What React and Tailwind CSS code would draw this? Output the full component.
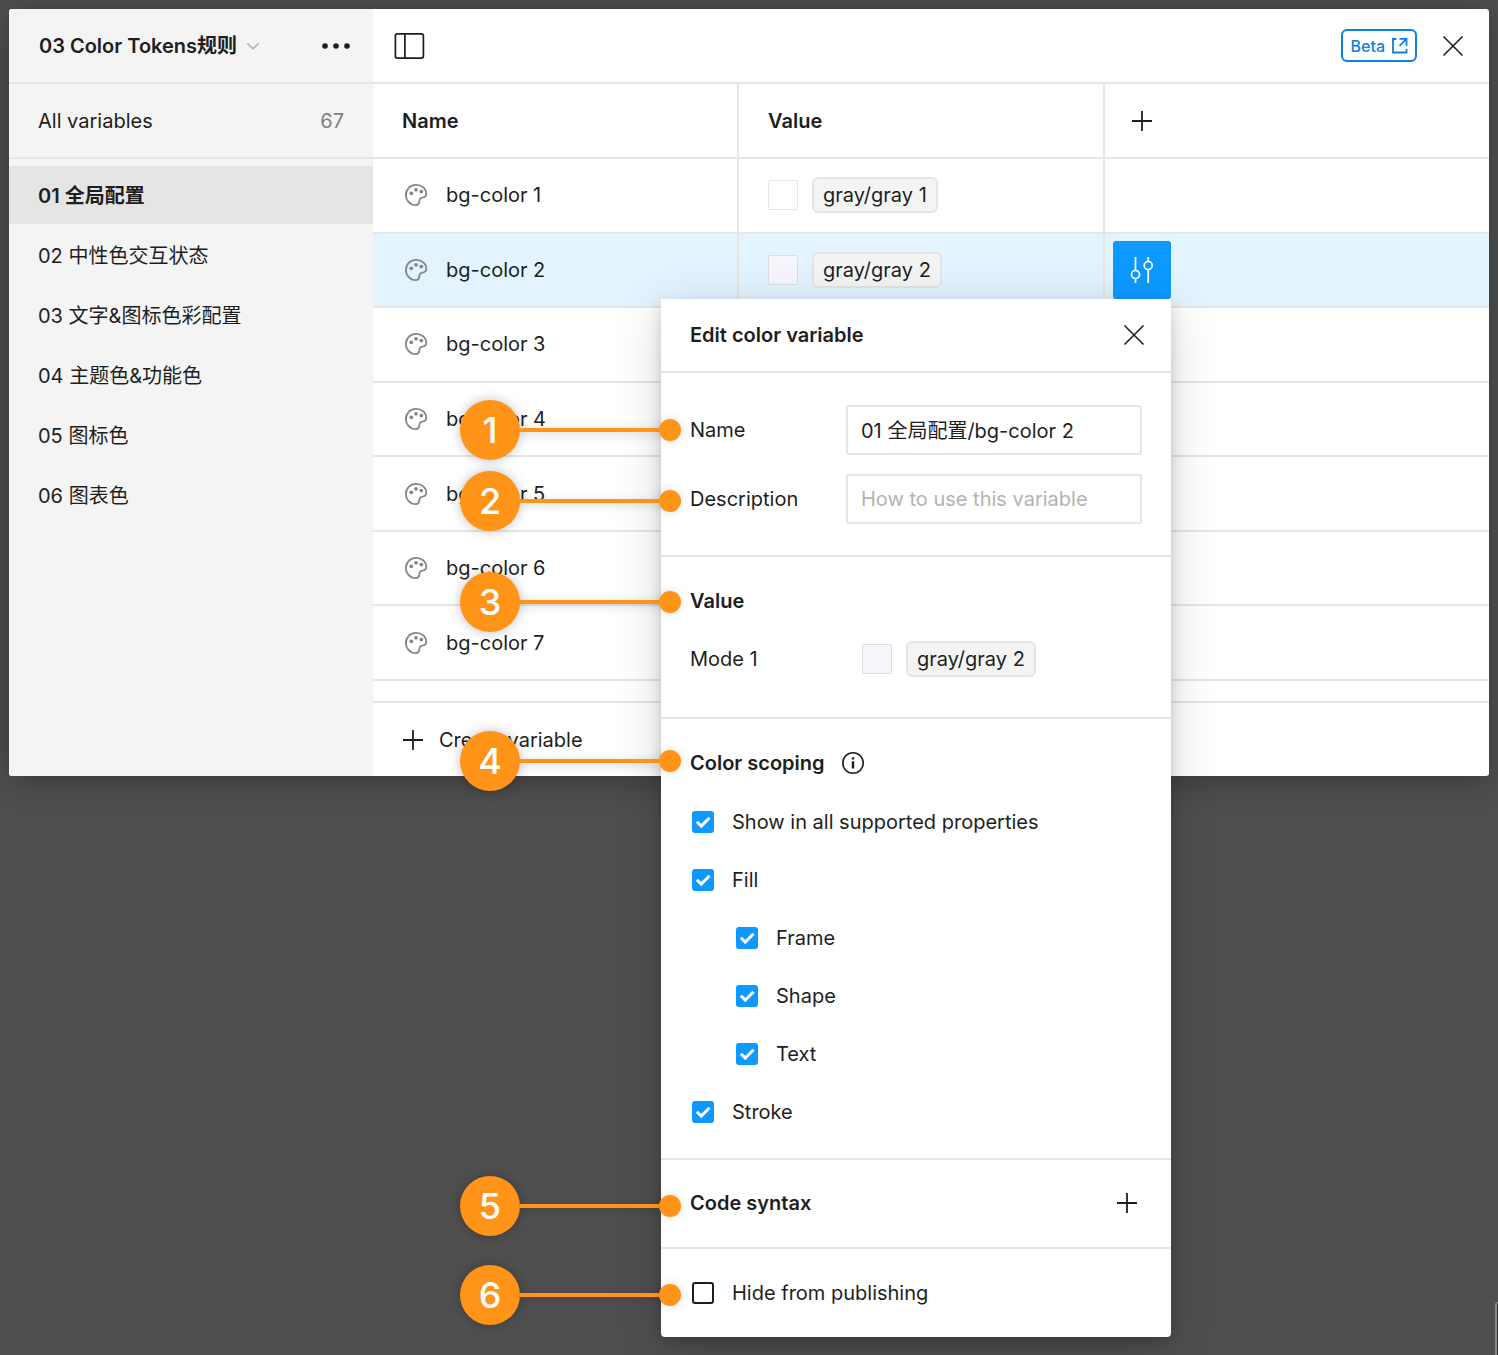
import { useState } from 'react'

const FONT = 'font-[Inter,"Noto_Sans_CJK_SC",sans-serif]'

const groups = [
  '01 全局配置',
  '02 中性色交互状态',
  '03 文字&图标色彩配置',
  '04 主题色&功能色',
  '05 图标色',
  '06 图表色',
]

const variables = [
  { id: 1, name: 'bg-color 1', value: 'gray/gray 1', swatch: 'bg-white' },
  { id: 2, name: 'bg-color 2', value: 'gray/gray 2', swatch: 'bg-[#f5f7fc]' },
  { id: 3, name: 'bg-color 3' },
  { id: 4, name: 'bg-color 4' },
  { id: 5, name: 'bg-color 5' },
  { id: 6, name: 'bg-color 6' },
  { id: 7, name: 'bg-color 7' },
]

const scopes = [
  { id: 'all', label: 'Show in all supported properties' },
  { id: 'fill', label: 'Fill' },
  { id: 'frame', label: 'Frame', nested: true },
  { id: 'shape', label: 'Shape', nested: true },
  { id: 'text', label: 'Text', nested: true },
  { id: 'stroke', label: 'Stroke' },
]

// callout pins, measured from the top of the popover
const callouts = [
  { n: 1, top: 'top-[101px]' },
  { n: 2, top: 'top-[172px]' },
  { n: 3, top: 'top-[273px]' },
  { n: 4, top: 'top-[432px]' },
  { n: 5, top: 'top-[877px]' },
  { n: 6, top: 'top-[966px]' },
]

function PlusIcon() {
  return (
    <svg width="22" height="22" viewBox="0 0 22 22" fill="none" stroke="currentColor" strokeWidth="1.8">
      <path d="M11 1v20M1 11h20" />
    </svg>
  )
}

function CloseIcon() {
  return (
    <svg width="22" height="22" viewBox="0 0 22 22" fill="none" stroke="currentColor" strokeWidth="1.6">
      <path d="M1.5 1.5l19 19M20.5 1.5l-19 19" />
    </svg>
  )
}

function PaletteIcon() {
  return (
    <svg width="24" height="24" viewBox="0 0 24 24" fill="none" className="-ml-px shrink-0 text-[#868686]">
      <path
        d="M12 1.9C6.2 1.9 1.9 6.4 1.9 12s4.3 10.1 9.7 10.1c2.5 0 3.5-1.1 3.6-3.1.1-2.8.6-4 3.2-4.3 2.5-.3 3.9-1.200 3.900-3.600C22.300 5.600 17.600 1.900 12 1.900Z"
        stroke="currentColor"
        strokeWidth="1.8"
      />
      <circle cx="7.3" cy="10.3" r="1.900" fill="currentColor" />
      <circle cx="12" cy="6.8" r="1.900" fill="currentColor" />
      <circle cx="17.3" cy="8.6" r="1.900" fill="currentColor" />
    </svg>
  )
}

function Swatch({ color }) {
  return <span className={`size-[30px] shrink-0 rounded-xs border border-black/10 ${color}`} />
}

function Chip({ children }) {
  return (
    <span className="flex h-9 items-center rounded-md border-2 border-[#e5e5e5] bg-[#f4f4f4] px-[9px] whitespace-nowrap">
      {children}
    </span>
  )
}

function Checkbox({ label, checked, onChange, nested }) {
  return (
    <label className={`flex h-[58px] items-center gap-[18px] ${nested ? 'pl-[46px]' : 'pl-0.5'}`}>
      <span className="grid size-[22px]">
        <input
          type="checkbox"
          checked={checked}
          onChange={onChange}
          className="peer col-start-1 row-start-1 size-[22px] appearance-none rounded-[3px] border-2 border-[#1e1e1e] bg-white checked:border-[#0d99ff] checked:bg-[#0d99ff]"
        />
        <svg
          viewBox="0 0 22 22"
          fill="none"
          stroke="white"
          strokeWidth="3"
          className="pointer-events-none invisible col-start-1 row-start-1 size-[22px] peer-checked:visible"
        >
          <path d="M4.900 10.700l4.400 4.400 8.200-8.300" />
        </svg>
      </span>
      {label}
    </label>
  )
}

function Callout({ n, top }) {
  return (
    <div className={`absolute -left-[201px] flex h-[60px] items-center text-[#ff9419] ${top}`}>
      <span className="flex size-[60px] items-center justify-center rounded-full bg-current shadow-[0_0_12px_rgba(0,0,0,0.25)]">
        <span className="text-4xl font-medium text-white">{n}</span>
      </span>
      <span className="h-1 w-[139px] bg-current shadow-[0_2px_10px_rgba(0,0,0,0.2)]" />
      <span className="size-[22px] rounded-full bg-current shadow-[0_0_10px_rgba(0,0,0,0.15)]" />
    </div>
  )
}

function EditPopover() {
  const [name, setName] = useState('01 全局配置/bg-color 2')
  const [description, setDescription] = useState('')
  const [checked, setChecked] = useState({
    all: true,
    fill: true,
    frame: true,
    shape: true,
    text: true,
    stroke: true,
    hide: false,
  })

  const toggle = (id) => setChecked((prev) => ({ ...prev, [id]: !prev[id] }))

  return (
    <div className="absolute top-full right-0 z-10 w-[510px] rounded-b-[4px] bg-white text-left shadow-[0_10px_50px_rgba(0,0,0,0.16),0_6px_14px_rgba(0,0,0,0.16)]">
      <div className="flex h-[74px] items-center justify-between border-b-2 border-[#e6e6e6] pr-[26px] pl-[29px]">
        <h2 className="font-semibold">Edit color variable</h2>
        <button aria-label="Close editor">
          <CloseIcon />
        </button>
      </div>

      <div className="flex flex-col gap-[19px] border-b-2 border-[#e6e6e6] px-[29px] pt-8 pb-[31px]">
        <div className="flex items-center">
          <label htmlFor="var-name" className="w-[156px]">Name</label>
          <input
            id="var-name"
            value={name}
            onChange={(e) => setName(e.target.value)}
            className="h-[50px] min-w-0 flex-1 rounded-[3px] border-2 border-[#e5e5e5] px-[13px]"
          />
        </div>
        <div className="flex items-center">
          <label htmlFor="var-desc" className="w-[156px]">Description</label>
          <input
            id="var-desc"
            value={description}
            onChange={(e) => setDescription(e.target.value)}
            placeholder="How to use this variable"
            className="h-[50px] min-w-0 flex-1 rounded-[3px] border-2 border-[#e5e5e5] px-[13px] placeholder:text-[#b3b3b3]"
          />
        </div>
      </div>

      <div className="border-b-2 border-[#e6e6e6] px-[29px] pt-[15px] pb-[29px]">
        <h3 className="flex h-[58px] items-center font-semibold">Value</h3>
        <div className="flex h-[58px] items-center">
          <span className="w-[172px]">Mode 1</span>
          <div className="flex items-center gap-[14px]">
            <Swatch color="bg-[#f5f7fc]" />
            <Chip>gray/gray 2</Chip>
          </div>
        </div>
      </div>

      <div className="border-b-2 border-[#e6e6e6] px-[29px] pt-[14px] pb-[17px]">
        <h3 className="flex h-[60px] items-center gap-4 font-semibold">
          Color scoping
          <svg width="24" height="24" viewBox="0 0 24 24" fill="none">
            <circle cx="12" cy="12" r="10.2" stroke="currentColor" strokeWidth="1.6" />
            <path d="M12 10.2v7.3M12 6.2v2.300" stroke="currentColor" strokeWidth="2.400" />
          </svg>
        </h3>
        {scopes.map((scope) => (
          <Checkbox
            key={scope.id}
            label={scope.label}
            nested={scope.nested}
            checked={checked[scope.id]}
            onChange={() => toggle(scope.id)}
          />
        ))}
      </div>

      <div className="flex h-[89px] items-center justify-between border-b-2 border-[#e6e6e6] pr-[33px] pl-[29px]">
        <h3 className="font-semibold">Code syntax</h3>
        <button aria-label="Add code syntax">
          <PlusIcon />
        </button>
      </div>

      <div className="px-[29px] py-[15px]">
        <Checkbox label="Hide from publishing" checked={checked.hide} onChange={() => toggle('hide')} />
      </div>

      {callouts.map((c) => (
        <Callout key={c.n} n={c.n} top={c.top} />
      ))}
    </div>
  )
}

function Sidebar() {
  const [active, setActive] = useState(0)

  return (
    <aside className="w-[364px] shrink-0 rounded-l-[3px] bg-[#f4f4f4]">
      <div className="flex h-[75px] items-center justify-between border-b-2 border-[#e6e6e6] pr-[22px] pl-[30px]">
        <button className="flex items-center gap-2 font-semibold">
          03 Color Tokens规则
          <svg width="16" height="16" viewBox="0 0 16 16" fill="none" stroke="#b3b3b3" strokeWidth="1.6">
            <path d="M2.300 5.200L8 10.900l5.700-5.700" />
          </svg>
        </button>
        <button aria-label="More options">
          <svg width="30" height="8" viewBox="0 0 30 8" fill="currentColor">
            <circle cx="4" cy="4" r="2.800" />
            <circle cx="15" cy="4" r="2.800" />
            <circle cx="26" cy="4" r="2.800" />
          </svg>
        </button>
      </div>
      <button className="flex h-[75px] w-full items-center justify-between border-b-2 border-[#e6e6e6] px-[29px]">
        All variables
        <span className="text-[#808080]">67</span>
      </button>
      <nav className="flex flex-col gap-0.5 pt-[7px]">
        {groups.map((group, i) => (
          <button
            key={group}
            onClick={() => setActive(i)}
            className={`h-[58px] px-[29px] pt-0.5 text-left ${i === active ? 'bg-[#e5e5e5] font-semibold' : ''}`}
          >
            {group}
          </button>
        ))}
      </nav>
    </aside>
  )
}

export default function App() {
  const selected = 2

  return (
    <div className={`relative min-h-screen bg-[#4f4f4f] p-[9px] text-xl text-[#1e1e1e] ${FONT}`}>
      <div className="flex rounded-[3px] bg-white shadow-[0_4px_36px_rgba(0,0,0,0.3)]">
        <Sidebar />

        <main className="min-w-0 flex-1">
          <div className="flex h-[75px] items-center justify-between border-b-2 border-[#e6e6e6] pr-[25px] pl-[21px]">
            <button aria-label="Toggle sidebar">
              <svg width="31" height="26" viewBox="0 0 31 26" fill="none" stroke="currentColor" strokeWidth="1.700">
                <rect x="1.400" y="0.900" width="28" height="24.200" rx="2" />
                <path d="M10.900 1v24" />
              </svg>
            </button>
            <div className="flex items-center gap-[25px]">
              <a
                href="#beta"
                className="flex h-[33px] items-center gap-1.5 rounded-md border-2 border-[#0c7fe8] px-[7px] text-base font-medium text-[#0c7fe8]"
              >
                Beta
                <svg width="17" height="17" viewBox="0 0 17 17" fill="none" stroke="currentColor" strokeWidth="1.800">
                  <path d="M5.400 2H2v13.500h13.500v-3.500M8.500 1.900h7v7M15.500 1.900L8.500 8.900" />
                </svg>
              </a>
              <button aria-label="Close">
                <CloseIcon />
              </button>
            </div>
          </div>

          <table className="h-[597px] w-full table-fixed border-separate border-spacing-0 text-left">
            <colgroup>
              <col className="w-[366px]" />
              <col className="w-[366px]" />
              <col />
            </colgroup>
            <thead>
              <tr className="h-[75px]">
                <th className="border-r-2 border-b-2 border-[#e6e6e6] pl-[29px] font-semibold">Name</th>
                <th className="border-r-2 border-b-2 border-[#e6e6e6] pl-[29px] font-semibold">Value</th>
                <th className="border-b-2 border-[#e6e6e6] pl-[26px] font-normal">
                  <button aria-label="Add mode" className="flex">
                    <PlusIcon />
                  </button>
                </th>
              </tr>
            </thead>
            <tbody>
              {variables.map((v) => (
                <tr key={v.id} className={`h-[74px] ${v.id === selected ? 'bg-[#e4f4ff]' : ''}`}>
                  <td className="border-r-2 border-b-2 border-[#e6e6e6] p-0 pl-8">
                    <div className="flex items-center gap-[18px]">
                      <PaletteIcon />
                      {v.name}
                    </div>
                  </td>
                  <td className="border-r-2 border-b-2 border-[#e6e6e6] p-0 pl-[29px]">
                    {v.value && (
                      <div className="flex items-center gap-[14px]">
                        <Swatch color={v.swatch} />
                        <Chip>{v.value}</Chip>
                      </div>
                    )}
                  </td>
                  <td className="border-b-2 border-[#e6e6e6] p-0 pl-2">
                    {v.id === selected && (
                      <div className="relative size-[58px]">
                        <button
                          aria-label="Edit variable"
                          className="flex size-[58px] items-center justify-center rounded-[3px] bg-[#0d99ff] text-white"
                        >
                          <svg width="24" height="28" viewBox="0 0 24 28" fill="none" stroke="currentColor" strokeWidth="1.700">
                            <path d="M5.500 1v13.500M5.500 22.500V27M18.200 1v4.500M18.200 13.500V27" />
                            <circle cx="5.500" cy="18.500" r="4" />
                            <circle cx="18.200" cy="9.500" r="4" />
                          </svg>
                        </button>
                        <EditPopover />
                      </div>
                    )}
                  </td>
                </tr>
              ))}
            </tbody>
          </table>

          <div className="mt-5 border-t-2 border-[#e6e6e6]">
            <button className="flex h-[73px] items-center gap-[15px] pl-[29px]">
              <PlusIcon />
              Create variable
            </button>
          </div>
        </main>
      </div>

      <div className="absolute right-0 bottom-0 h-[53px] w-[3px] rounded-tl-[3px] border-t border-l-2 border-[#8a8a8a] bg-[#333333]" />
    </div>
  )
}
